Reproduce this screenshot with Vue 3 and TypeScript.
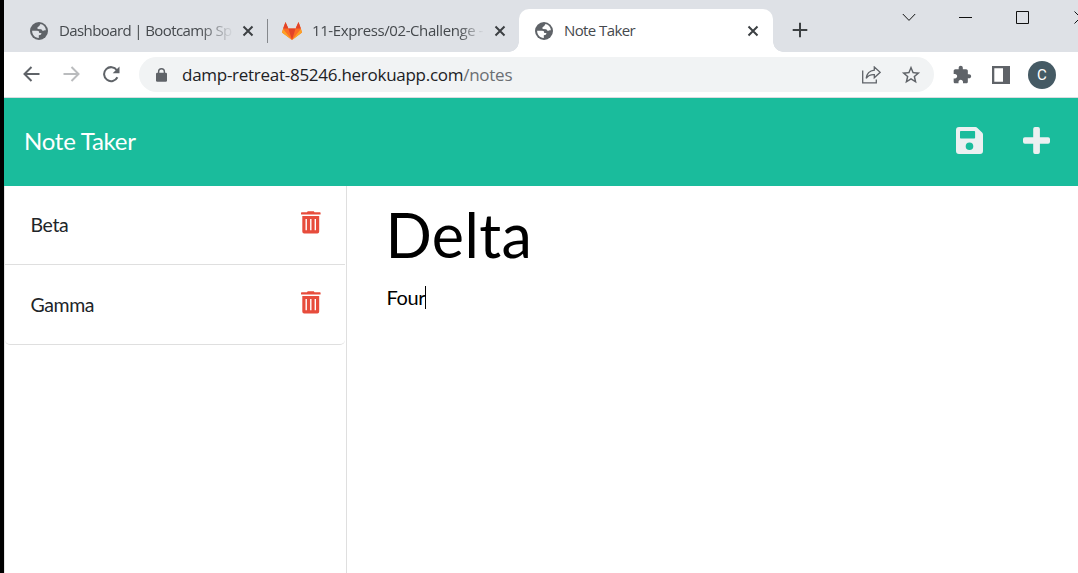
<script setup lang="ts">
import { ref } from 'vue'

interface Note {
  id: number
  title: string
}

const notes = ref<Note[]>([
  { id: 1, title: 'Beta' },
  { id: 2, title: 'Gamma' },
])
const draft = ref({ title: 'Delta', text: 'Four' })
const tabs = [
  { title: 'Dashboard | Bootcamp Sp', kind: 'globe', cls: 'first' },
  { title: '11-Express/02-Challenge -', kind: 'gitlab', cls: 'second' },
  { title: 'Note Taker', kind: 'globe', cls: 'active' },
]
</script>

<template>
  <div class="window">
    <div class="tabstrip">
      <div v-for="tab in tabs" :key="tab.title" class="tab" :class="tab.cls">
        <svg v-if="tab.kind === 'globe'" class="globe" viewBox="0 0 18 18">
          <circle cx="9" cy="9" r="9" fill="#5f6368" />
          <path class="land" d="M10.6 2.1C9.4 3 9.8 4.1 8.6 4.6C7.2 5 7.3 6.1 7.7 7L11 7.2C12 7.4 11.8 8.7 12.7 8.8C13.9 8.9 14.4 8 15.9 8.2C15.7 5.2 13.7 2.8 10.6 2.1Z" />
          <path class="land" d="M2.1 8.8H7.1C8.8 8.8 9.3 9.7 9.2 11H11.4C11.4 12.5 10.5 13.2 8.8 13.3V15.9C5 16 2.1 13 2.1 8.8Z" />
        </svg>
        <svg v-else class="fox" viewBox="0 0 20 18">
          <path d="M3.5 0L1 7L0 10.5L10 18L20 10.5L19 7L16.5 0L13.6 6.6H6.4Z" fill="#fc6d26" />
          <path d="M6.4 6.6H13.6L10 18Z" fill="#e24329" />
          <path d="M3.5 0L6.4 6.6H1.1ZM16.5 0L13.6 6.6H18.9Z" fill="#e24329" />
          <path d="M1.1 7L0 10.5L10 18ZM18.9 7L20 10.5L10 18Z" fill="#fca326" />
        </svg>
        <span class="tab-title">{{ tab.title }}</span>
        <svg class="close" viewBox="0 0 12 12"><path d="M1.5 1.5L10.5 10.5M10.5 1.5L1.5 10.5" /></svg>
      </div>
      <svg class="new-tab" viewBox="0 0 16 16"><path d="M8 .7V15.3M.7 8H15.3" /></svg>
      <div class="controls">
        <svg class="chevron" viewBox="0 0 14 9"><path d="M.8 1L7 7.4L13.2 1" /></svg>
        <svg class="minimize" viewBox="0 0 13 1"><path d="M0 .5H13" /></svg>
        <svg class="maximize" viewBox="0 0 13 13"><path d="M.5 .5H12.5V12.5H.5Z" /></svg>
        <svg class="exit" viewBox="0 0 13 13"><path d="M.5 .5L12.5 12.5M12.5 .5L.5 12.5" /></svg>
      </div>
    </div>

    <div class="toolbar">
      <svg class="arrow" viewBox="0 0 17 16"><path d="M16.5 8H1.5M8.5 1L1.5 8L8.5 15" /></svg>
      <svg class="arrow forward" viewBox="0 0 17 16"><path d="M.5 8H15.5M8.5 1L15.5 8L8.5 15" /></svg>
      <svg class="reload" viewBox="0 0 18 17">
        <path d="M14.9 4.2A7 7 0 1 0 15.4 11.2" fill="none" stroke="#5f6368" stroke-width="2" />
        <path d="M17.5 .5V7.3H10.7Z" fill="#5f6368" />
      </svg>
      <div class="address">
        <svg class="lock" viewBox="0 0 11 14">
          <rect y="4.8" width="11" height="9" rx="1.3" fill="#5f6368" />
          <path d="M2.6 5.3V3.7A2.9 2.9 0 0 1 8.4 3.7V5.3" fill="none" stroke="#5f6368" stroke-width="1.4" />
        </svg>
        <span class="url">damp-retreat-85246.herokuapp.com<span>/notes</span></span>
        <svg class="share" viewBox="0 0 19 18">
          <path d="M.7 4.5V16.8H14.3V13.5" />
          <path d="M12.3 1L18.2 6.3L12.3 11.7V8.7C8.5 8.5 6 9.7 4.2 12.4C4.7 8 7.2 4.7 12.3 4.1Z" />
        </svg>
        <svg class="star" viewBox="0 0 24 24">
          <path d="M22 9.24l-7.19-.62L12 2 9.19 8.63 2 9.24l5.46 4.73L5.82 21 12 17.27 18.18 21l-1.63-7.03L22 9.24zM12 15.4l-3.76 2.27 1-4.28-3.32-2.88 4.38-.38L12 6.1l1.71 4.04 4.38.38-3.32 2.88 1 4.28L12 15.4z" />
        </svg>
      </div>
      <svg class="puzzle" viewBox="0 0 24 24">
        <path d="M20.5 11H19V7c0-1.1-.9-2-2-2h-4V3.5C13 2.12 11.88 1 10.5 1S8 2.12 8 3.5V5H4c-1.1 0-1.99.9-1.99 2v3.8H3.5c1.49 0 2.7 1.21 2.7 2.7s-1.21 2.7-2.7 2.7H2V20c0 1.1.9 2 2 2h3.8v-1.5c0-1.49 1.21-2.7 2.7-2.7s2.7 1.21 2.7 2.7V22H17c1.1 0 2-.9 2-2v-4h1.5c1.38 0 2.5-1.12 2.5-2.5S21.88 11 20.5 11z" />
      </svg>
      <svg class="panel" viewBox="0 0 18 18">
        <path d="M0 0H18V18H0ZM2.3 2.3V15.7H11V2.3Z" fill="#5f6368" fill-rule="evenodd" />
      </svg>
      <div class="avatar">C</div>
    </div>

    <header class="navbar">
      <span class="brand">Note Taker</span>
      <svg class="save" viewBox="0 0 27 27">
        <path d="M3 0H19.4Q20.5 0 21.4 .9L26.1 5.6Q27 6.5 27 7.6V24Q27 27 24 27H3Q0 27 0 24V3Q0 0 3 0ZM4.8 4Q4 4 4 4.8V10.7Q4 11.5 4.8 11.5H18.3Q19.1 11.5 19.1 10.7V4.8Q19.1 4 18.3 4ZM13.5 15.5A3.8 3.8 0 1 0 13.5 23.1A3.8 3.8 0 1 0 13.5 15.5Z" fill-rule="evenodd" />
      </svg>
      <svg class="add" viewBox="0 0 27 27">
        <path d="M12 0H15Q16.9 0 16.9 1.9V10.2H25.1Q27 10.2 27 12.1V14.8Q27 16.7 25.1 16.7H16.9V25.1Q16.9 27 15 27H12Q10.2 27 10.2 25.1V16.7H1.9Q0 16.7 0 14.8V12.1Q0 10.2 1.9 10.2H10.2V1.9Q10.2 0 12 0Z" />
      </svg>
    </header>

    <main class="content">
      <aside class="sidebar">
        <ul class="list">
          <li v-for="note in notes" :key="note.id">
            <span>{{ note.title }}</span>
            <svg class="trash" viewBox="0 0 20 23">
              <path d="M.7 1.3H6L6.7 .3H12.8L13.5 1.3H19Q19.6 1.3 19.6 2V3Q19.6 3.6 19 3.6H.7Q0 3.6 0 3V2Q0 1.3 .7 1.3ZM1.3 5.1H18.2V20.6Q18.2 22.5 16.3 22.5H3.2Q1.3 22.5 1.3 20.6ZM4.5 8V19.3H5.9V8ZM9.1 8V19.3H10.5V8ZM13.6 8V19.3H15V8Z" fill-rule="evenodd" />
            </svg>
          </li>
        </ul>
      </aside>
      <section class="editor">
        <div class="note-title">{{ draft.title }}</div>
        <div class="note-text">{{ draft.text }}<i class="caret"></i></div>
      </section>
    </main>
  </div>
</template>

<style>
body { margin: 0; overflow: hidden; }
</style>

<style scoped>
* { box-sizing: border-box; }
svg { display: block; flex: none; }
.window {
  width: 1078px; height: 573px; overflow: hidden;
  border-left: 4px solid #000; background: #fff;
  display: flex; flex-direction: column;
  font-family: "Lato", sans-serif;
}
.tabstrip {
  height: 52px; flex: none; display: flex; background: #dee1e6;
  font: 15px/20px "Open Sans", sans-serif; color: #45494d;
}
.tab { display: flex; align-items: center; height: 43px; margin-top: 9px; position: relative; flex: none; }
.tab.first { width: 264px; padding: 0 14px 0 26px; }
.tab.first::after { content: ""; position: absolute; right: 0; top: 10px; width: 1px; height: 24px; background: #85888c; }
.tab.second { width: 251px; padding: 0 13px 0 14px; }
.tab.active { width: 254px; padding: 0 14px 0 16px; background: #fff; border-radius: 10px 10px 0 0; }
.tab.active::before, .tab.active::after { content: ""; position: absolute; bottom: 0; width: 10px; height: 10px; }
.tab.active::before { left: -10px; background: radial-gradient(circle at 0 0, transparent 9.5px, #fff 10px); }
.tab.active::after { right: -10px; background: radial-gradient(circle at 100% 0, transparent 9.5px, #fff 10px); }
.globe { width: 18px; height: 18px; }
.land { fill: #dee1e6; }
.active .land { fill: #fff; }
.fox { width: 20px; height: 18px; }
.tab-title { flex: 1; min-width: 0; margin: 0 8px 2px 11px; white-space: nowrap; letter-spacing: -.6px; }
.first .tab-title { letter-spacing: -.6px; mask-image: linear-gradient(90deg, #000 80%, transparent 100%); }
.second .tab-title { margin-left: 10px; letter-spacing: -.4px; mask-image: linear-gradient(90deg, #000 84%, transparent 99%); }
.close { width: 12px; height: 12px; fill: none; stroke: #3c4043; stroke-width: 2; }
.new-tab { width: 16px; height: 16px; margin: 22px 0 0 19px; fill: none; stroke: #3c4043; stroke-width: 2; }
.controls { display: flex; margin-left: 94px; fill: none; stroke: #111; stroke-width: 1; }
.chevron { width: 14px; height: 9px; margin-top: 13px; }
.minimize { width: 13px; height: 1px; margin: 17px 0 0 43px; }
.maximize { width: 13px; height: 13px; margin: 11px 0 0 44px; }
.exit { width: 13px; height: 13px; margin: 11px 0 0 45px; }
.toolbar { height: 46px; flex: none; display: flex; align-items: center; padding-left: 19px; border-bottom: 1px solid #dadce0; }
.arrow { width: 17px; height: 16px; margin-bottom: 1px; fill: none; stroke: #5f6368; stroke-width: 2; }
.arrow.forward { margin-left: 23px; stroke: #babcbe; }
.reload { width: 18px; height: 17px; margin: 0 0 1px 22px; }
.address { width: 795px; height: 35px; margin-left: 19px; padding: 0 12px 0 17px; border-radius: 18px; background: #f1f3f4; display: flex; align-items: center; flex: none; }
.lock { width: 11px; height: 14px; }
.url { flex: 1; margin-left: 15px; font: 17px/24px "Open Sans", sans-serif; letter-spacing: -.27px; color: #202124; white-space: nowrap; }
.url span { color: #6b6f73; }
.share { width: 19px; height: 18px; fill: none; stroke: #5f6368; stroke-width: 1.3; }
.star { width: 22px; height: 22px; margin-left: 19px; fill: #5f6368; }
.puzzle { width: 20px; height: 20px; margin-left: 18px; fill: #5f6368; }
.panel { width: 18px; height: 18px; margin-left: 20px; }
.avatar { width: 28px; height: 28px; margin-left: 18px; flex: none; border-radius: 50%; background: #455a64; color: #fff; font: 15px/28px "Roboto", sans-serif; text-align: center; }
.navbar { height: 88px; flex: none; display: flex; align-items: center; padding: 0 28px 3px 20px; background: #1abc9c; fill: #ecf0f1; }
.brand { flex: 1; color: #fff; font-size: 24px; line-height: 36px; letter-spacing: -.25px; }
.save, .add { width: 27px; height: 27px; }
.add { margin-left: 40px; }
.content { flex: 1; display: flex; min-height: 0; }
.sidebar { width: 343px; flex: none; border-right: 1px solid #dfdfdf; border-left: 1px solid #e4e4e4; padding-right: 1px; }
.list { margin: 0; padding: 0; list-style: none; border-bottom: 1px solid #dfdfdf; border-radius: 0 0 5px 5px; }
.list li { height: 78px; padding: 0 24px 0 25px; display: flex; align-items: center; justify-content: space-between; font-size: 19.5px; line-height: 30px; letter-spacing: -.4px; color: #212529; }
.list li + li { height: 80px; border-top: 1px solid #dfdfdf; }
.list li span { margin: 0 0 0 .5px; }
.trash { width: 20px; height: 23px; margin-bottom: 5px; fill: #e74c3c; }
.editor { padding: 13px 40px; color: #000; }
.note-title { margin-left: -1.5px; font-size: 61px; line-height: 72px; letter-spacing: .4px; }
.note-text { margin: 11px 0 0 -.5px; display: flex; align-items: center; font-size: 20px; line-height: 30px; letter-spacing: -.4px; }
.caret { width: 1px; height: 23px; background: #000; }
</style>
